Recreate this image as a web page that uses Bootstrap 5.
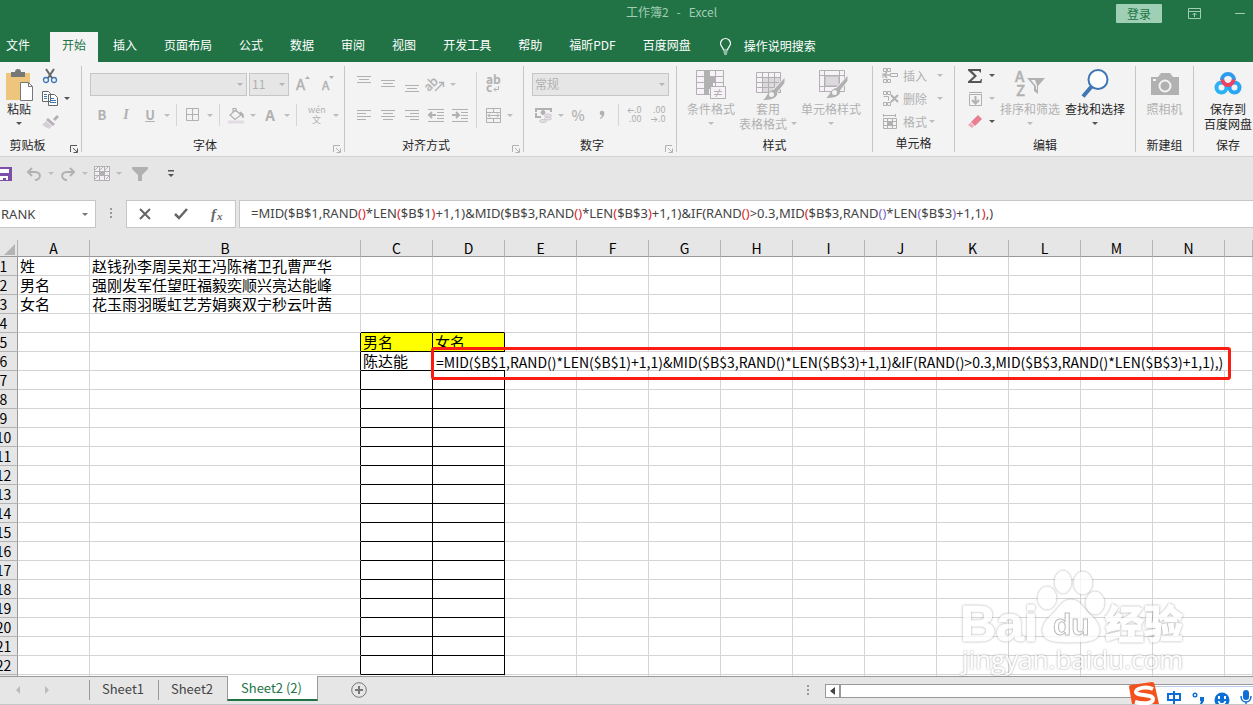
<!DOCTYPE html>
<html lang="zh-CN">
<head>
<meta charset="utf-8">
<meta name="viewport" content="width=device-width, initial-scale=1">
<title>工作簿2 - Excel</title>
<link href="https://cdn.jsdelivr.net/npm/bootstrap@5.3.0/dist/css/bootstrap.min.css" rel="stylesheet">
<style>
:root{--green:#217346;--ui:#e6e6e6;--ribbon:#f3f3f3;--line:#c6c6c6;--dim:#b1b1b1;--ink:#444}
body{font:12px/16px "Noto Sans CJK SC",sans-serif;color:#262626;background:var(--ui);height:100vh;overflow:hidden}
button{border:0;background:none;padding:0;color:inherit;font:inherit;line-height:inherit}
svg{display:block;flex:none;overflow:visible}
/* title bar and tabs */
.titlebar{background:var(--green);color:#a0cdb4;height:32px;padding-top:4px}
.titlebar .doc{padding-left:90px}
.login{background:#9fd0b5;color:var(--green);width:46px;height:19px;border-radius:1px}
.win{right:0;top:4px;gap:26px;padding-right:8px}
.menu{background:var(--green);height:30px;gap:3px;color:#fff}
.menu a{color:#fff;text-decoration:none;padding:5px 12px 0;white-space:nowrap}
.menu a.file{padding:5px 17px 0 6px}
.menu a.on{background:var(--ribbon);color:var(--green)}
.tell{gap:12px;padding:0 13px 2px}
/* ribbon */
.ribbon{background:var(--ribbon);height:95px;border-bottom:1px solid #d2d2d2;padding-top:4px;overflow:hidden}
.grp{height:86px;border-right:1px solid var(--line);flex:none}
.grp .bodyrow{height:70px}
.foot{height:16px;padding-top:1px;line-height:14px;white-space:nowrap;margin-top:1px}
.foot .go{width:16px;padding:7px 0 0 5px}
.g-clip{width:82px}.g-font{width:263px}.g-align{width:179px}.g-num{width:153px}.g-style{width:196px}
.g-cell{width:82px}.g-edit{width:181px}.g-new{width:58px}.g-save{width:68px;border-right:0}
.two{padding-top:6px;gap:7px}
.line{height:24px;display:flex;align-items:center}
.ib{width:24px;height:24px;display:flex;align-items:center;justify-content:center;color:var(--dim);flex:none}
.wide{width:30px}
.cr{width:10px;height:24px;display:flex;align-items:center;justify-content:center;color:#bdbdbd;flex:none}
.cr::before,.dn::before{content:"";border:3px solid transparent;border-top-color:currentColor;border-bottom:0}
.dk{color:#555}
.vs{width:1px;height:22px;background:#d5d5d5;margin:0 4px;flex:none}
.vs.tall{height:56px}
.combo{appearance:none;background:#e6e6e6;border:1px solid var(--line);height:23px;color:var(--dim);font:12px/16px "Noto Sans CJK SC",sans-serif;padding:0 2px;border-radius:0;opacity:1}
.cw{position:relative}
.cw::after{content:"";position:absolute;right:4px;top:10px;border:3px solid transparent;border-top-color:#b5b5b5;border-bottom:0;pointer-events:none}
.c-font{width:157px}.c-size{width:40px}.c-num{width:137px}
.big{display:flex;flex-direction:column;align-items:center;line-height:15px;white-space:nowrap;padding-top:3px}
.big svg{height:32px}
.big .dn{height:15px;display:flex;align-items:center;color:#bdbdbd}
.big .dn.dk{color:#555}
.big.off,.off{color:var(--dim)}
.three{margin-top:-2px}
.three .line{height:23px}
.three .ib,.three .cr{height:22px}
.b-cond{width:52px}.b-tab{width:62px}.b-cst{width:64px}.b-sort{width:66px}.b-find{width:64px}.b-new{width:57px}
/* quick access, formula bar */
.qat{height:43px;padding-bottom:10px;color:#b0b0b0}
.fbar{height:28px;color:var(--ink);font-size:13px}
.fbar .bx{background:#fff;border:1px solid var(--line)}
.namebox{width:96px;border-left:0!important}
.namebox input{border:0;outline:0;width:80px;padding:0 0 0 1px;color:var(--ink);font:13px "Noto Sans",sans-serif}
.fdots{width:30px;color:#999}
.fbtn{width:110px;color:#666}
.fx{margin-left:3px;padding:0 11px;font-family:"Noto Sans",sans-serif;line-height:25px;white-space:nowrap;overflow:hidden;border-right:0!important}
.r{color:#e0252b}.p{color:#8064c8}
/* sheet */
.sheetwrap{margin-top:12px;overflow:hidden;position:relative;flex:1 1 0;background:#fff;border-bottom:1px solid #999}
.grid{margin-left:-10px;width:calc(100% + 10px);table-layout:fixed;border-collapse:separate;border-spacing:0;font-size:15px;line-height:18px;color:#000}
.grid th{background:var(--ui);font-weight:400;text-align:center;padding:0;border-right:1px solid #b4b4b4;border-bottom:1px solid #b4b4b4}
.grid thead th{height:17px;line-height:16px;border-bottom-color:#999;font-size:14px}
.grid tbody th{border-right-color:#999;font-size:14px}
.grid td{height:19px;padding:0 2px;border-right:1px solid #d4d4d4;border-bottom:1px solid #d4d4d4;white-space:nowrap;position:relative}
.grid .kr{border-right-color:#000}.grid .kb{border-bottom-color:#000}
.grid .yl{background:#ff0}
.c0{width:28px}.cA{width:72px}.cB{width:271px}
.editing{position:absolute;left:-2px;top:-5px;z-index:2;height:33px;border:3px solid #fb1d12;border-radius:3px;padding:0 3px 0 0;font-size:14px}
.editing span{display:block;background:#fff;height:18px;margin-top:2px;padding:0 2px;line-height:20px}
.corner{border-left:11px solid transparent;border-bottom:11px solid #b4b4b4;width:0;margin:2px 0 0 14px}
.wm{right:60px;bottom:0;opacity:.75;filter:drop-shadow(0 0 1px #888)}
/* sheet tabs */
.tabs{height:28px;color:var(--ink);font-size:13px;border-bottom:1px solid var(--line)}
.tabs .nav-arrows{width:89px;color:#bbb;padding:0 39px 2px 15px}
.tabs a{color:inherit;text-decoration:none;height:20px;line-height:17px;width:69px;text-align:center;border-left:1px solid #999;margin-top:3px;padding-right:2px}
.tabs a.on{background:#fff;color:var(--green);width:91px;line-height:23px;margin-top:-1px;border-bottom:2px solid var(--green);border-right:1px solid #999;position:relative;height:25px;z-index:1}
.addtab{margin:5px 0 0 33px;height:16px}
.hs{margin-top:7px;height:14px;width:428px}
.hs .ar{width:15px;background:#fff;border:1px solid #999}
.hs .trk{background:#fff;border:1px solid #999;border-right:0}
.ime{right:0;bottom:0;height:20px;z-index:5}
.ime .strip{background:#fff;border-top:1px solid #b6cdea;height:18px;width:98px}
</style>
</head>
<body class="d-flex flex-column">
<header>
  <div class="titlebar position-relative text-center">
    <span class="doc">工作簿2&nbsp;&nbsp; -&nbsp;&nbsp; Excel</span>
    <div class="win position-absolute d-flex align-items-center">
      <button class="login">登录</button>
      <button aria-label="功能区显示选项"><svg width="13" height="11" fill="none" stroke="currentColor"><path d="M.5.5h12v10H.5zM.5 3.500h12M6.500 9V5M4.500 7l2-2 2 2"/></svg></button>
      <button aria-label="最小化" class="ms-2"><svg width="10" height="11" stroke="currentColor"><path d="M0 5.500h10"/></svg></button>
    </div>
  </div>
  <nav class="menu d-flex">
    <a href="#" class="file">文件</a><a href="#" class="on">开始</a><a href="#">插入</a><a href="#">页面布局</a><a href="#">公式</a><a href="#">数据</a><a href="#">审阅</a><a href="#">视图</a><a href="#">开发工具</a><a href="#">帮助</a><a href="#">福昕PDF</a><a href="#">百度网盘</a>
    <button class="tell d-flex align-items-center"><svg width="13" height="17" fill="none" stroke="#fff" stroke-width="1.2"><path d="M4.500 12C4.500 9.500 1.500 8.500 1.500 5.500a5 5 0 0 1 10 0c0 3-3 4-3 6.500zM4.500 14h4M5 16h3"/></svg>操作说明搜索</button>
  </nav>
</header>

<div class="ribbon d-flex">
  <section class="grp g-clip">
    <div class="bodyrow d-flex">
      <button class="big" style="width:38px"><svg width="30" height="32"><path fill="#eec57c" d="M2 4h24v27H2z"/><path fill="#777" d="M7 8V3h4a3 3 0 0 1 6 0h4v5z"/><path fill="#fff" stroke="#777" d="M16.500 13.500h8l4 4v14h-12z"/><path fill="none" stroke="#777" d="M24.500 13.500v4h4"/></svg>粘贴<span class="dn dk"></span></button>
      <div class="three">
        <div class="line"><button class="ib" aria-label="剪切"><svg width="16" height="16" fill="none"><path stroke="#666" stroke-width="2" d="M4 1l6 9M12 1L6 10"/><circle cx="4" cy="12" r="2.500" stroke="#3c78b4" stroke-width="1.300"/><circle cx="12" cy="12" r="2.500" stroke="#3c78b4" stroke-width="1.300"/></svg></button></div>
        <div class="line"><button class="ib" aria-label="复制"><svg width="16" height="15" fill="#fff" stroke="#666"><path d="M.5.5h6l2 2v8h-8zM6.500 3.500h6l3 3v8h-9z"/><path stroke="#3c78b4" d="M2 3.500h3M2 5.500h3M2 7.500h3M8 7.500h4M8 9.500h6M8 11.500h6"/></svg></button><button class="cr dk" aria-label="复制选项"></button></div>
        <div class="line"><button class="ib" aria-label="格式刷"><svg width="17" height="14"><path fill="#b5b0b5" d="M11 4l4-4 2 2-4 4zM6 3l7 6-2 2-7-6z"/><path fill="#d5d0d5" d="M4 6l6 5-3 3-7-4z"/></svg></button></div>
      </div>
    </div>
    <div class="foot d-flex"><span class="flex-fill text-center" style="padding-right:10px">剪贴板</span><button class="go dk" aria-label="剪贴板设置"><svg width="8" height="8" fill="none" stroke="currentColor"><path d="M.5 7V.5H7M3 3l4 4M7.500 3.500v4h-4"/></svg></button></div>
  </section>

  <section class="grp g-font">
    <div class="bodyrow two d-flex flex-column ps-2">
      <div class="line"><span class="cw"><select class="combo c-font d-block" disabled aria-label="字体"><option></option></select></span><span class="cw" style="margin:0 2px"><select class="combo c-size d-block" disabled aria-label="字号"><option>11</option></select></span>
        <button class="ib" aria-label="增大字号"><svg width="16" height="18"><text x="1" y="15" font-size="15" fill="currentColor" stroke="currentColor" stroke-width=".4">A</text><path fill="currentColor" d="M10 4l2.500-3L15 4z"/></svg></button>
        <button class="ib" aria-label="减小字号"><svg width="16" height="18"><text x="3" y="15" font-size="12" fill="currentColor" stroke="currentColor" stroke-width=".4">A</text><path fill="currentColor" d="M10 1l2.500 3L15 1z"/></svg></button></div>
      <div class="line"><button class="ib fw-bold" style="font-size:13px">B</button><button class="ib fst-italic fw-bold" style="font-family:'Liberation Serif',serif;font-size:14px">I</button><button class="ib fw-bold text-decoration-underline" style="font-size:13px">U</button><button class="cr" aria-label="下划线"></button><i class="vs"></i>
        <button class="ib" aria-label="边框"><svg width="14" height="14" fill="none" stroke="currentColor"><path d="M.5.5h12v12H.5zM6.500 0v13M0 6.500h13"/></svg></button><button class="cr" aria-label="边框选项"></button><i class="vs"></i>
        <button class="ib" aria-label="填充颜色"><svg width="17" height="17" fill="none" stroke="currentColor"><path stroke-width="1.200" d="M7.500 3l5.500 5-6 4.500L2 8zM5 5V1.500h3V5"/><path fill="currentColor" d="M12 5c3 1 4 3 3 6-1-2-1-3-3-4z"/><path stroke="#e2dce2" stroke-width="3" d="M0 15h16"/></svg></button><button class="cr" aria-label="填充选项"></button>
        <button class="ib fw-bold" style="font-size:15px">A</button><button class="cr" aria-label="字体颜色选项"></button><i class="vs"></i>
        <button class="ib wide" aria-label="拼音"><svg width="16" height="19" fill="currentColor" font-size="9"><text x="0" y="7">wén</text><text x="4" y="17">文</text></svg></button><button class="cr" aria-label="拼音选项"></button></div>
    </div>
    <div class="foot d-flex"><span class="flex-fill text-center">字体</span><button class="go off" aria-label="字体设置"><svg width="8" height="8" fill="none" stroke="currentColor"><path d="M.5 7V.5H7M3 3l4 4M7.500 3.500v4h-4"/></svg></button></div>
  </section>

  <section class="grp g-align">
    <div class="bodyrow d-flex" style="padding-left:7px">
      <div class="two d-flex flex-column">
        <div class="line"><button class="ib" aria-label="顶端对齐"><svg width="14" height="16" stroke="currentColor"><path d="M0 .5h14M2 3.500h10M0 6.500h14"/></svg></button><button class="ib" aria-label="垂直居中"><svg width="14" height="16" stroke="currentColor"><path d="M0 4.500h14M2 7.500h10M0 10.500h14"/></svg></button><button class="ib" aria-label="底端对齐"><svg width="14" height="16" stroke="currentColor"><path d="M0 9.500h14M2 12.500h10M0 15.500h14"/></svg></button>
          <button class="ib" aria-label="方向"><svg width="17" height="16" fill="none" stroke="currentColor"><text x="-3" y="11" font-size="12" stroke-width=".3" fill="currentColor" transform="rotate(-45 5 9)">ab</text><path stroke-width="1.300" d="M7 15l8-8M11 6.500h4.500V11"/></svg></button><button class="cr" aria-label="方向选项"></button></div>
        <div class="line"><button class="ib" aria-label="左对齐"><svg width="14" height="12" stroke="currentColor"><path d="M0 1.500h14M0 4.500h9M0 7.500h14M0 10.500h9"/></svg></button><button class="ib" aria-label="居中"><svg width="14" height="12" stroke="currentColor"><path d="M0 1.500h14M2 4.500h10M0 7.500h14M2 10.500h10"/></svg></button><button class="ib" aria-label="右对齐"><svg width="14" height="12" stroke="currentColor"><path d="M0 1.500h14M5 4.500h9M0 7.500h14M5 10.500h9"/></svg></button>
          <button class="ib" aria-label="减少缩进"><svg width="16" height="14" stroke="currentColor" fill="none"><path d="M0 1.500h16M9 4.500h7M9 7.500h7M9 10.500h7M0 13.500h16"/><path stroke-width="2" d="M1 7h7M4 4L1 7l3 3"/></svg></button><button class="ib" aria-label="增加缩进"><svg width="16" height="14" stroke="currentColor" fill="none"><path d="M0 1.500h16M9 4.500h7M9 7.500h7M9 10.500h7M0 13.500h16"/><path stroke-width="2" d="M0 7h6M4 4l3 3-3 3"/></svg></button></div>
      </div>
      <i class="vs tall" style="margin-top:6px"></i>
      <div class="two d-flex flex-column">
        <div class="line"><button class="ib" aria-label="自动换行"><svg width="14" height="18" fill="currentColor" font-size="12" font-weight="700"><text x="0" y="9">ab</text><text x="0" y="17">c</text><path fill="none" stroke="currentColor" d="M12.500 11v3.500H8M10 12.500l-2 2 2 2"/></svg></button></div>
        <div class="line"><button class="ib" aria-label="合并后居中"><svg width="15" height="15" stroke="currentColor" fill="none"><path d="M.5.5h14v14H.5zM0 4.500h15M0 10.500h15M7.500 0v4M7.500 11v4M2 7.500h11M4 5.500l-2 2 2 2M11 5.500l2 2-2 2"/></svg></button><button class="cr" aria-label="合并选项"></button></div>
      </div>
    </div>
    <div class="foot d-flex"><span class="flex-fill text-center">对齐方式</span><button class="go off" aria-label="对齐设置"><svg width="8" height="8" fill="none" stroke="currentColor"><path d="M.5 7V.5H7M3 3l4 4M7.500 3.500v4h-4"/></svg></button></div>
  </section>

  <section class="grp g-num">
    <div class="bodyrow two d-flex flex-column ps-2">
      <div class="line"><span class="cw"><select class="combo c-num d-block" disabled aria-label="数字格式"><option>常规</option></select></span></div>
      <div class="line"><button class="ib" aria-label="会计数字格式"><svg width="18" height="17" fill="none" stroke="currentColor"><path stroke-width="2" d="M1 5V2h15v3M1 6v4h5"/><circle cx="8" cy="5.500" r="2" fill="currentColor"/><g fill="#e6e0e6" stroke="#cfc9cf"><ellipse cx="13" cy="8.500" rx="3.500" ry="1.500"/><ellipse cx="13" cy="11.500" rx="3.500" ry="1.500"/><ellipse cx="8" cy="14" rx="3.500" ry="1.500"/></g></svg></button><button class="cr" aria-label="会计选项"></button>
        <button class="ib" style="font-size:14px;font-weight:500">%</button><button class="ib" aria-label="千位分隔"><svg width="6" height="10" fill="currentColor"><circle cx="3" cy="3" r="2.300"/><path d="M5.300 3c0 3-1 4.500-4 6l-.5-1C2.500 7 3 6 3 4z"/></svg></button><i class="vs"></i>
        <button class="ib" aria-label="增加小数位数"><svg width="16" height="16" fill="currentColor" font-size="9"><text x="7" y="6">.0</text><text x="2" y="15">.00</text><path fill="none" stroke="currentColor" d="M1 3.500h6M3.500 1L1 3.500 3.500 6"/></svg></button><button class="ib" aria-label="减少小数位数"><svg width="16" height="16" fill="currentColor" font-size="9"><text x="2" y="6">.00</text><text x="7" y="15">.0</text><path fill="none" stroke="currentColor" d="M0 12.500h6M3.500 10L6 12.500 3.500 15"/></svg></button></div>
    </div>
    <div class="foot d-flex"><span class="flex-fill text-center">数字</span><button class="go off" aria-label="数字设置"><svg width="8" height="8" fill="none" stroke="currentColor"><path d="M.5 7V.5H7M3 3l4 4M7.500 3.500v4h-4"/></svg></button></div>
  </section>

  <section class="grp g-style">
    <div class="bodyrow d-flex ps-2">
      <button class="big off b-cond"><svg width="32" height="32" fill="#f7f2f7" stroke="currentColor"><path d="M1.500 1.500h27v24h-27zM1.500 7.500h27M1.500 13.500h27M1.500 19.500h27M9.500 1v25M20.500 1v25"/><path stroke="none" fill="#b1b1b1" d="M10 2h5v5h-5zM10 8h10v5H10zM10 14h8v5h-8zM10 20h4v5h-4z"/><path d="M15.500 17.500h15v12h-15z"/><path d="M19 22.500h8M19 25.500h8M25 20l-4 8"/></svg>条件格式<span class="dn"></span></button>
      <button class="big off b-tab"><svg width="32" height="32" fill="#f7f2f7" stroke="currentColor"><path d="M4.500 3.500h24v20h-24z"/><path fill="#ddd8dd" d="M10.500 8.500h18v15h-18z"/><path d="M4.500 8.500h24M4.500 13.500h24M4.500 18.500h24M10.500 3v20M16.500 3v20M22.500 3v20"/><path fill="#b1b1b1" stroke="#f3f3f3" d="M33 8v6l-8 10-4-3z"/><path fill="#b1b1b1" stroke="none" d="M21 21c3 0 5 2 4 5-2 4-7 5-14 5 4-2 4-9 10-10z"/><circle cx="19.500" cy="25.500" r="2.500" fill="#f3f3f3" stroke="none"/></svg>套用<span class="d-flex align-items-center">表格格式<span class="dn ms-1"></span></span></button>
      <button class="big off b-cst"><svg width="32" height="32" fill="#f7f2f7" stroke="currentColor"><path d="M4.500 1.500h25v21h-25zM4.500 6.500h25M4.500 17.500h25M9.500 1v22M24.500 1v22"/><path fill="#ddd8dd" d="M10 7h14v10H10z"/><path fill="#b1b1b1" stroke="#f3f3f3" d="M33 6v6l-8 10-4-3z"/><path fill="#b1b1b1" stroke="none" d="M21 19c3 0 5 2 4 5-2 4-7 5-14 5 4-2 4-9 10-10z"/><circle cx="19.500" cy="23.500" r="2.500" fill="#f3f3f3" stroke="none"/></svg>单元格样式<span class="dn"></span></button>
    </div>
    <div class="foot text-center">样式</div>
  </section>

  <section class="grp g-cell">
    <div class="bodyrow ps-2 off"><div class="three">
      <div class="line"><button class="d-flex align-items-center gap-1"><svg width="18" height="16" fill="none" stroke="currentColor"><path d="M2.500.5h3v3h-3zM6.500.5h3v3h-3zM2.500 11.500h3v3h-3zM6.500 11.500h3v3h-3zM9.500 5.500h7v3h-7zM2 5v5"/><path stroke-width="1.500" d="M3 7h6M6 4L3 7l3 3"/></svg>插入</button><button class="cr ms-2" aria-label="插入选项"></button></div>
      <div class="line"><button class="d-flex align-items-center gap-1"><svg width="18" height="16" fill="none" stroke="currentColor"><path d="M2.500.5h3v3h-3zM6.500.5h3v3h-3zM2.500 11.500h3v3h-3zM6.500 11.500h3v3h-3zM2.500 5.500h5v4"/><path stroke-width="2" d="M10 4l7 7M17 4l-7 7"/></svg>删除</button><button class="cr ms-2" aria-label="删除选项"></button></div>
      <div class="line"><button class="d-flex align-items-center gap-1"><svg width="18" height="16" fill="none" stroke="currentColor"><path d="M2.500 1.500h12M2.500 0v3M14.500 0v3M2.500 4.500h13v10h-13zM2.500 7.500h13M2.500 11.500h13M6.500 4v11M11.500 4v11"/><path fill="currentColor" d="M7 8h4v3H7z"/></svg>格式</button><button class="cr" aria-label="格式选项"></button></div>
    </div></div>
    <div class="foot text-center">单元格</div>
  </section>

  <section class="grp g-edit">
    <div class="bodyrow d-flex ps-2">
      <div class="three">
        <div class="line"><button class="ib" aria-label="自动求和"><svg width="16" height="16" fill="#555"><path d="M1 1h13v3.500h-1L12 3H5l5 5-5.500 5H13l1-2h1l-.5 4H1v-1.500L7 8 1 2.500z"/></svg></button><button class="cr dk" aria-label="求和选项"></button></div>
        <div class="line"><button class="ib" aria-label="填充"><svg width="15" height="16" fill="none" stroke="currentColor"><path d="M1 1.500h13M1 3.500h13M1.500 3v11.500h12V3"/><path stroke-width="2" d="M7.500 5v7M4 9l3.500 3.500L11 9"/></svg></button><button class="cr" aria-label="填充选项"></button></div>
        <div class="line"><button class="ib" aria-label="清除"><svg width="14" height="13"><path fill="#e87f90" d="M10 0l4 4-7 7-4-4z"/><path fill="#f0a8b4" d="M2.500 7.500L6 11l-2 2-4-3z"/></svg></button><button class="cr dk" aria-label="清除选项"></button></div>
      </div>
      <button class="big off b-sort"><svg width="32" height="32" fill="currentColor"><text x="1" y="13" font-size="15" font-weight="500" stroke="currentColor" stroke-width=".4">A</text><text x="2" y="27" font-size="15" font-weight="500" stroke="currentColor" stroke-width=".4">Z</text><path d="M13 9h18l-7 8v8l-4-3v-5z"/><path fill="#f3f3f3" d="M17 11h4l2 5.500V21l-1-1v-3z"/></svg>排序和筛选<span class="dn"></span></button>
      <button class="big b-find"><svg width="32" height="32" fill="#fff"><path stroke="#3f77b5" stroke-width="4" d="M13 17L4 27.500"/><circle cx="19" cy="10.500" r="9.500" stroke="#3f77b5" stroke-width="2"/></svg>查找和选择<span class="dn dk"></span></button>
    </div>
    <div class="foot text-center">编辑</div>
  </section>

  <section class="grp g-new">
    <div class="bodyrow"><button class="big off b-new"><svg width="30" height="32"><path fill="currentColor" d="M1 8h7l3-4h9l3 4h6v18H1z"/><circle cx="15" cy="17" r="5.500" fill="#b1b1b1" stroke="#f3f3f3" stroke-width="2"/><path fill="#f3f3f3" d="M3 10h3v2H3z"/></svg>照相机</button></div>
    <div class="foot text-center">新建组</div>
  </section>

  <section class="grp g-save">
    <div class="bodyrow"><button class="big w-100"><svg width="28" height="32" fill="none" stroke-width="4"><path stroke="#2f9bf0" d="M8 11a6 6 0 0 1 12 0"/><circle cx="7.500" cy="18.500" r="5" stroke="#2bb3f3"/><circle cx="20.500" cy="18.500" r="5" stroke="#2aa5f5"/><path stroke="#f2405f" d="M8.500 10.500a5.500 5.500 0 0 0 11 0"/></svg>保存到<span>百度网盘</span></button></div>
    <div class="foot text-center">保存</div>
  </section>
</div>

<div class="qat d-flex align-items-center">
  <button aria-label="保存"><svg width="12" height="14"><path fill="#7c4fa8" d="M0 0h12v14H0z"/><path fill="#fff" d="M0 2h9v4H0zM0 9h8v4H6v-2H3v2H0z"/></svg></button>
  <button class="ib" style="margin-left:10px" aria-label="撤消"><svg width="16" height="14" fill="none" stroke="currentColor" stroke-width="2"><path d="M6 1L2 5l4 4M2 5h7c7 0 6 8 0 8"/></svg></button><button class="cr" aria-label="撤消选项"></button>
  <button class="ib" aria-label="恢复"><svg width="16" height="14" fill="none" stroke="currentColor" stroke-width="2"><path d="M10 1l4 4-4 4M14 5H7c-7 0-6 8 0 8"/></svg></button><button class="cr" aria-label="恢复选项"></button>
  <button class="ib" aria-label="表格"><svg width="16" height="15" fill="none" stroke="currentColor"><path fill="#f4eef4" d="M.5.5h15v14H.5z"/><path d="M0 5.500h16M0 9.500h16M5.500 0v15M10.500 0v15M1 4l3-3M6 4l3-3M11 4l3-3M1 13l3-3M12 13l3-3"/><path fill="currentColor" d="M6 6h4v3H6z"/></svg></button><button class="cr" aria-label="表格选项"></button>
  <button class="ib ms-1" aria-label="筛选"><svg width="16" height="14" fill="currentColor"><path d="M0 0h16v2L10 8v6H6V8L0 2z"/></svg></button>
  <button class="dk ms-3" aria-label="自定义快速访问工具栏"><svg width="6" height="8" fill="currentColor"><path d="M0 0h6v1.500H0zM0 4h6L3 7z"/></svg></button>
</div>

<div class="fbar d-flex">
  <div class="bx namebox d-flex align-items-center"><input value="RANK" aria-label="名称框"><button class="cr" style="color:#777" aria-label="名称列表"></button></div>
  <div class="fdots d-flex align-items-center justify-content-center"><svg width="2" height="12" fill="currentColor"><path d="M0 0h2v2H0zM0 4h2v2H0zM0 8h2v2H0z"/></svg></div>
  <div class="bx fbtn d-flex align-items-center">
    <button class="flex-fill d-flex justify-content-center" aria-label="取消"><svg width="12" height="12" stroke="#666" stroke-width="2"><path d="M1 1l10 10M11 1L1 11"/></svg></button>
    <button class="flex-fill d-flex justify-content-center" aria-label="输入"><svg width="12" height="12" fill="none" stroke="#666" stroke-width="2.500"><path d="M0 6l4 4 8-9"/></svg></button>
    <button class="flex-fill d-flex justify-content-center" aria-label="插入函数"><svg width="12" height="15" fill="#666"><text x="0" y="12" font-family="Liberation Serif" font-style="italic" font-weight="700" font-size="15">f</text><text x="6" y="13" font-family="Liberation Serif" font-style="italic" font-weight="700" font-size="11">x</text></svg></button>
  </div>
  <div class="bx fx flex-fill" contenteditable="true" role="textbox" aria-label="编辑栏" spellcheck="false">=MID($B$1,RAND<span class="r">()</span>*LEN<span class="r">(</span>$B$1<span class="r">)</span>+1,1)&amp;MID($B$3,RAND<span class="r">()</span>*LEN<span class="r">(</span>$B$3<span class="r">)</span>+1,1)&amp;IF(RAND<span class="r">()</span>&gt;0.3,MID<span class="r">(</span>$B$3,RAND<span class="p">()</span>*LEN<span class="p">(</span>$B$3<span class="p">)</span>+1,1<span class="r">)</span>,)</div>
</div>

<main class="sheetwrap">
  <table class="grid">
    <colgroup id="cols"><col class="c0"><col class="cA"><col class="cB"></colgroup>
    <thead><tr id="head"><th><div class="corner"></div></th></tr></thead>
    <tbody id="rows"></tbody>
  </table>
  <svg class="wm position-absolute" width="236" height="112" fill="#fff" stroke="#fff" font-family="'Liberation Sans','Noto Sans CJK SC',sans-serif" aria-hidden="true">
    <text x="3" y="77" font-size="50" font-weight="700">Bai</text>
    <ellipse cx="90" cy="34" rx="9" ry="11"/><ellipse cx="106" cy="18" rx="8" ry="11"/><ellipse cx="126" cy="19" rx="9" ry="11"/><ellipse cx="138" cy="39" rx="9" ry="11"/>
    <path d="M114 36c9 0 12 8 18 14 7 6 11 12 10 18-1 8-8 10-28 10s-27-2-28-10c-1-6 3-12 10-18 6-6 9-14 18-14z"/>
    <text x="96" y="71" font-size="30" font-weight="700" stroke="#a8a8a8">du</text>
    <text x="148" y="74" font-size="39" font-weight="900">经验</text>
    <text x="5" y="105" font-size="26" font-family="'Open Sans'" stroke="none">jingyan.baidu.com</text>
  </svg>
</main>

<footer class="tabs d-flex position-relative">
  <div class="nav-arrows d-flex align-items-center justify-content-between">
    <button aria-label="上一张"><svg width="6" height="8" fill="currentColor"><path d="M5 0v8L1 4z"/></svg></button>
    <button aria-label="下一张"><svg width="6" height="8" fill="currentColor"><path d="M1 0v8l4-4z"/></svg></button>
  </div>
  <a href="#">Sheet1</a><a href="#">Sheet2</a><a href="#" class="on">Sheet2 (2)</a>
  <button class="addtab" aria-label="新工作表"><svg width="16" height="16" fill="none" stroke="#777"><circle cx="8" cy="8" r="7.300"/><path stroke-width="2" d="M4 8h8M8 4v8"/></svg></button>
  <svg class="ms-auto me-3" style="margin-top:8px" width="2" height="12" fill="#999"><path d="M0 0h2v2H0zM0 4h2v2H0zM0 8h2v2H0z"/></svg>
  <div class="hs d-flex">
    <button class="ar d-flex align-items-center justify-content-center" aria-label="向左滚动"><svg width="5" height="8" fill="#444"><path d="M5 0v8L0 4z"/></svg></button>
    <div class="trk flex-fill"></div>
  </div>
  <div class="ime position-absolute d-flex align-items-end">
    <svg width="30" height="22" style="margin-right:-4px;position:relative"><path fill="#f4511e" d="M0 5Q0 3 2 3L23 0q2 0 2.500 2L30 22H3z"/><path fill="none" stroke="#fff" stroke-width="4" d="M24 7C17 4 7 6 7 10s17 2 17 7-10 5-18 3"/></svg>
    <div class="strip d-flex align-items-center overflow-hidden">
      <svg width="98" height="17" fill="none" stroke="#0b6fd6" stroke-width="2"><path d="M13 7h12v6H13zM19 4v13"/><circle cx="40" cy="8" r="1.800" stroke-width="1.400"/><path fill="#0b6fd6" stroke="none" d="M45 10h4v4l-2 3h-2l1-3h-1z"/><circle cx="67" cy="13" r="7.500" fill="#0b6fd6" stroke="none"/><path stroke="#fff" stroke-width="1.500" d="M63.500 14c1 4 6 4 7 0"/><path stroke="#fff" d="M64 9v3M70 9v3"/><rect x="88" y="3" width="6" height="10" rx="3" fill="#0b6fd6" stroke="none"/><path d="M86 9c0 8 10 8 10 0M91 15v4" stroke-width="1.500"/></svg>
    </div>
  </div>
</footer>

<script>
const letters = 'ABCDEFGHIJKLMN'.split('');
const cols = document.getElementById('cols'), head = document.getElementById('head'), rows = document.getElementById('rows');
letters.slice(2).forEach(() => cols.insertAdjacentHTML('beforeend', '<col class="cA">'));
cols.insertAdjacentHTML('beforeend', '<col>');
letters.concat('').forEach(l => head.insertAdjacentHTML('beforeend', `<th>${l}</th>`));
const data = {
  A1: '姓', B1: '赵钱孙李周吴郑王冯陈褚卫孔曹严华',
  A2: '男名', B2: '强刚发军任望旺福毅奕顺兴亮达能峰',
  A3: '女名', B3: '花玉雨羽暖虹艺芳娟爽双宁秒云叶茜',
  C5: '男名', D5: '女名', C6: '陈达能',
  D6: '<div class="editing"><span>=MID($B$1,RAND()*LEN($B$1)+1,1)&amp;MID($B$3,RAND()*LEN($B$3)+1,1)&amp;IF(RAND()&gt;0.3,MID($B$3,RAND()*LEN($B$3)+1,1),)</span></div>'
};
for (let r = 1; r <= 23; r++) {
  const cells = letters.concat('').map(l => {
    const c = [];
    if (r > 4 && r < 23 && 'BCD'.includes(l) && l) c.push('kr');
    if (r > 3 && r < 23 && (l === 'C' || l === 'D')) c.push('kb');
    if (r === 5 && (l === 'C' || l === 'D')) c.push('yl');
    return `<td class="${c.join(' ')}">${data[l + r] || ''}</td>`;
  }).join('');
  rows.insertAdjacentHTML('beforeend', `<tr><th>${r < 23 ? r : ''}</th>${cells}</tr>`);
}
</script>
<script src="https://cdn.jsdelivr.net/npm/bootstrap@5.3.0/dist/js/bootstrap.bundle.min.js"></script>
</body>
</html>
